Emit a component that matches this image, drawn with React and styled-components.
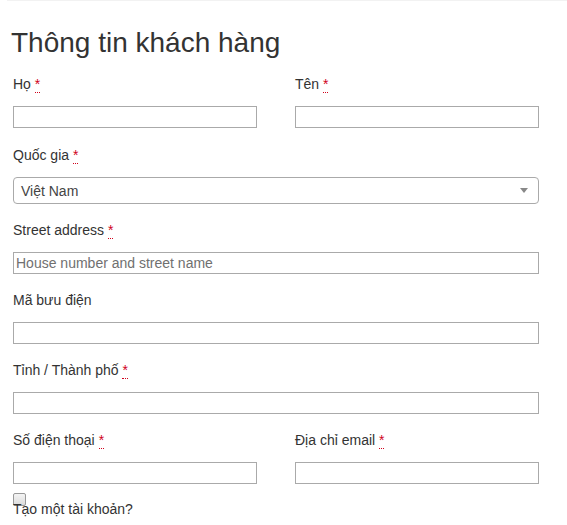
import React from "react";
import styled, { createGlobalStyle } from "styled-components";

const GlobalStyle = createGlobalStyle`
  body {
    margin: 0;
    background: #fff;
    font-family: "Liberation Sans", Arial, sans-serif;
    color: #333;
  }
`;

const Page = styled.div`
  width: 567px;
  height: 525px;
  overflow: hidden;
  border-top: 1px solid #f2f2f2;
  margin-left: 7px;
  box-sizing: border-box;
`;

const Form = styled.div`
  width: 526px;
  margin-left: 6px;
`;

const Title = styled.h3`
  margin: 25px 0 0 -2px;
  font-size: 28px;
  line-height: 34px;
  font-weight: normal;
  color: #333;
`;

const Row = styled.div`
  display: grid;
  grid-template-columns: 244px 244px;
  column-gap: 38px;
`;

const Field = styled.div`
  display: flex;
  flex-direction: column;
  padding-top: ${(p) => p.$gap || 15}px;
`;

const Label = styled.label`
  display: block;
  height: 22px;
  font-size: 14px;
  line-height: 22px;
  color: #333;
  margin-bottom: 11px;
  white-space: nowrap;
`;

const Required = styled.abbr`
  color: #d0021b;
  text-decoration: none;
  border-bottom: 1px dotted #d0021b;
  font-size: 14px;
  line-height: 1;
`;

const Input = styled.div`
  box-sizing: border-box;
  height: 22px;
  border: 1px solid #aaa;
  background: #fff;
  font-size: 14px;
  line-height: 20px;
  color: #707070;
  padding-left: 2px;
`;

const Select = styled.div`
  box-sizing: border-box;
  height: 27px;
  border: 1px solid #aaa;
  border-radius: 4px;
  display: flex;
  align-items: center;
  justify-content: space-between;
  padding: 0 8px 0 7px;
  font-size: 14px;
  color: #444;
`;

const Arrow = styled.span`
  width: 0;
  height: 0;
  border-left: 4px solid transparent;
  border-right: 4px solid transparent;
  border-top: 5px solid #888;
  margin-right: 2px;
`;

const CheckRow = styled.label`
  display: block;
  padding-top: 9px;
  font-size: 14px;
  line-height: 20px;
  color: #333;
`;

const Box = styled.span`
  display: block;
  width: 11px;
  height: 11px;
  border: 1px solid #999;
  border-radius: 2px;
  background: linear-gradient(#f4f4f4, #dcdcdc);
  margin-bottom: -7px;
`;

const Req = () => <Required title="required">*</Required>;

export default function App() {
  return (
    <>
      <GlobalStyle />
      <Page>
        <Form>
          <Title>Thông tin khách hàng</Title>
          <Row>
            <Field $gap={13}>
              <Label>Họ <Req /></Label>
              <Input />
            </Field>
            <Field $gap={13}>
              <Label>Tên <Req /></Label>
              <Input />
            </Field>
          </Row>
          <Field $gap={16}>
            <Label>Quốc gia <Req /></Label>
            <Select>
              <span>Việt Nam</span>
              <Arrow />
            </Select>
          </Field>
          <Field>
            <Label>Street address <Req /></Label>
            <Input>House number and street name</Input>
          </Field>
          <Field>
            <Label>Mã bưu điện</Label>
            <Input />
          </Field>
          <Field>
            <Label>Tỉnh / Thành phố <Req /></Label>
            <Input />
          </Field>
          <Row>
            <Field>
              <Label>Số điện thoại <Req /></Label>
              <Input />
            </Field>
            <Field>
              <Label>Địa chỉ email <Req /></Label>
              <Input />
            </Field>
          </Row>
          <CheckRow>
            <Box />
            Tạo một tài khoản?
          </CheckRow>
        </Form>
      </Page>
    </>
  );
}
